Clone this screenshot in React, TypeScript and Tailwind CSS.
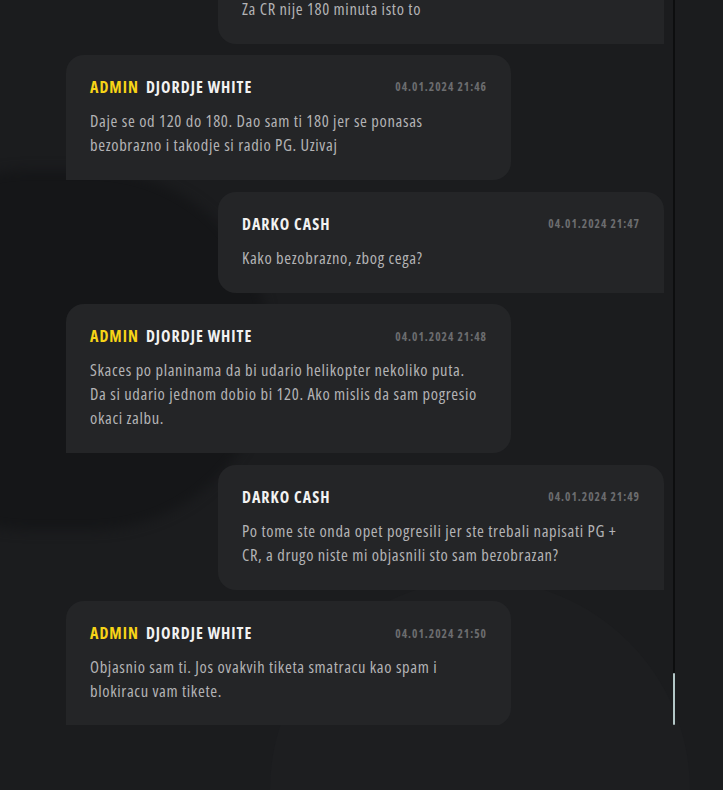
import React from "react";

type Msg = {
  id: number;
  admin: boolean;
  name: string;
  date: string;
  text: string;
};

const messages: Msg[] = [
  { id: 1, admin: false, name: "DARKO CASH", date: "04.01.2024 21:45", text: "Za CR nije 180 minuta isto to" },
  { id: 2, admin: true, name: "DJORDJE WHITE", date: "04.01.2024 21:46", text: "Daje se od 120 do 180. Dao sam ti 180 jer se ponasas bezobrazno i takodje si radio PG. Uzivaj" },
  { id: 3, admin: false, name: "DARKO CASH", date: "04.01.2024 21:47", text: "Kako bezobrazno, zbog cega?" },
  { id: 4, admin: true, name: "DJORDJE WHITE", date: "04.01.2024 21:48", text: "Skaces po planinama da bi udario helikopter nekoliko puta.\nDa si udario jednom dobio bi 120. Ako mislis da sam pogresio okaci zalbu." },
  { id: 5, admin: false, name: "DARKO CASH", date: "04.01.2024 21:49", text: "Po tome ste onda opet pogresili jer ste trebali napisati PG + CR, a drugo niste mi objasnili sto sam bezobrazan?" },
  { id: 6, admin: true, name: "DJORDJE WHITE", date: "04.01.2024 21:50", text: "Objasnio sam ti. Jos ovakvih tiketa smatracu kao spam i blokiracu vam tikete." },
];

const font = { fontFamily: '"Open Sans", "DejaVu Sans Condensed", sans-serif' };

function Bubble({ msg }: { msg: Msg }) {
  return (
    <div
      className={
        msg.admin
          ? "w-[445px] self-start bg-[#242527] rounded-t-[18px] rounded-br-[18px] px-6 pt-[22px] pb-[23px]"
          : "w-[446px] self-end bg-[#242527] rounded-t-[18px] rounded-bl-[18px] px-6 pt-[22px] pb-[23px]"
      }
    >
      <div className="flex items-center justify-between h-5">
        <div className="flex items-center gap-[7px] text-[16px] font-bold font-stretch-condensed tracking-[1px] leading-5">
          {msg.admin && <span className="text-[#f7d417]">ADMIN</span>}
          <span className="text-[#f2f2f2]">{msg.name}</span>
        </div>
        <span className="text-[11.5px] font-bold font-stretch-condensed tracking-[1px] text-[#6c6d6f]">{msg.date}</span>
      </div>
      <p className="mt-3 whitespace-pre-line text-[16.5px] font-medium font-stretch-condensed tracking-[0.65px] leading-6 text-[#b3b3b5]">
        {msg.text}
      </p>
    </div>
  );
}

export default function App() {
  return (
    <div className="relative w-[723px] h-[790px] overflow-hidden bg-[#1b1c1e]" style={font}>
      <div className="absolute left-[-150px] top-[170px] w-[420px] h-[360px] rounded-full bg-[#151618] blur-[6px]" />
      <div className="absolute left-[270px] top-[580px] w-[420px] h-[420px] rounded-full bg-[#1d1e20]" />
      <div className="relative flex gap-[9px] pl-[66px] h-[725px]">
        <div className="w-[598px] h-[725px] overflow-hidden">
          <div className="flex flex-col gap-[11.6px] -mt-[57.5px]">
            {messages.map((m) => (
              <Bubble key={m.id} msg={m} />
            ))}
          </div>
        </div>
        <div className="w-[2px] h-[725px] flex flex-col bg-[#0d0e0f]">
          <div className="flex-1" />
          <div className="h-[52px] bg-[#b3c7c7] rounded-[1px]" />
        </div>
      </div>
    </div>
  );
}
